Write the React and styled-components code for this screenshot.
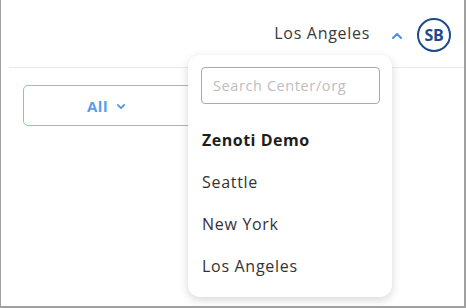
import React from 'react';
import styled, { createGlobalStyle } from 'styled-components';

const GlobalStyle = createGlobalStyle`
  html, body {
    margin: 0;
    padding: 0;
    background: #ffffff;
  }
  * {
    box-sizing: border-box;
  }
`;

const centers = ['Zenoti Demo', 'Seattle', 'New York', 'Los Angeles'];

const App = () => {
  return (
    <>
      <GlobalStyle />
      <Frame>
        <Header>
          <CurrentCenter>Los Angeles</CurrentCenter>
          <Chevron width='10' height='6' viewBox='0 0 10 6' up>
            <path d='M1 5 L5 1 L9 5' />
          </Chevron>
          <Avatar>SB</Avatar>
        </Header>
        <Content>
          <FilterButton>
            All
            <Chevron width='8' height='5' viewBox='0 0 10 6'>
              <path d='M1 1 L5 5 L9 1' />
            </Chevron>
          </FilterButton>
        </Content>
        <Menu>
          <SearchInput placeholder='Search Center/org' />
          <MenuList>
            {centers.map((name, i) => (
              <MenuItem key={name} bold={i === 0}>
                {name}
              </MenuItem>
            ))}
          </MenuList>
        </Menu>
      </Frame>
    </>
  );
};

const Frame = styled.div`
  position: relative;
  width: 466px;
  height: 308px;
  border-left: 1px solid #a0a0a0;
  border-right: 2px solid #a0a0a0;
  border-bottom: 2px solid #a0a0a0;
  font-family: 'Open Sans', 'Noto Sans', sans-serif;
  overflow: hidden;
`;

const Header = styled.div`
  display: flex;
  align-items: center;
  justify-content: flex-end;
  height: 68px;
  margin-left: 8px;
  padding-right: 13px;
  border-bottom: 1px solid #e7e9ef;
`;

const CurrentCenter = styled.span`
  font-size: 16px;
  color: #3a3a3a;
  letter-spacing: 0.7px;
  margin-right: 22px;
  margin-top: -2px;
`;

const Chevron = styled.svg`
  fill: none;
  stroke: #4b8fe8;
  stroke-width: 2;
  stroke-linecap: round;
  stroke-linejoin: round;
  margin-top: ${(props) => (props.up ? '4px' : '1px')};
  margin-left: ${(props) => (props.up ? '0' : '9px')};
`;

const Avatar = styled.div`
  display: flex;
  align-items: center;
  justify-content: center;
  width: 34px;
  height: 34px;
  margin-left: 15px;
  margin-top: 3px;
  border: 2px solid #1d4a8c;
  border-radius: 50%;
  color: #1d4a8c;
  font-weight: 700;
  font-size: 16px;
  letter-spacing: -0.3px;
`;

const Content = styled.div`
  padding: 17px 0 0 22px;
`;

const FilterButton = styled.div`
  display: flex;
  align-items: center;
  justify-content: center;
  width: 200px;
  height: 41px;
  padding-right: 34px;
  border: 1px solid #8db9f6;
  border-radius: 5px;
  color: #5b9cf0;
  font-weight: 700;
  font-size: 15px;
  letter-spacing: 0.5px;
`;

const Menu = styled.div`
  position: absolute;
  top: 55px;
  left: 187px;
  width: 204px;
  height: 242px;
  padding: 12px 12px 0 13px;
  background: #ffffff;
  border-radius: 12px;
  box-shadow: 0 3px 10px rgba(0, 0, 0, 0.16);
`;

const SearchInput = styled.input`
  display: block;
  width: 179px;
  height: 37px;
  padding: 0 11px;
  border: 1px solid #a9a9a9;
  border-radius: 4px;
  font-family: inherit;
  font-size: 14.5px;
  letter-spacing: 0.6px;
  color: #333;
  outline: none;
  &::placeholder {
    color: #bdbdbd;
  }
`;

const MenuList = styled.div`
  display: flex;
  flex-direction: column;
  margin-top: 15px;
`;

const MenuItem = styled.div`
  height: 42px;
  line-height: 42px;
  padding-left: 1px;
  font-size: 16px;
  letter-spacing: ${(props) => (props.bold ? '0.5px' : '0.7px')};
  font-weight: ${(props) => (props.bold ? 700 : 400)};
  color: ${(props) => (props.bold ? '#1e1e1e' : '#333333')};
`;

export default App;
